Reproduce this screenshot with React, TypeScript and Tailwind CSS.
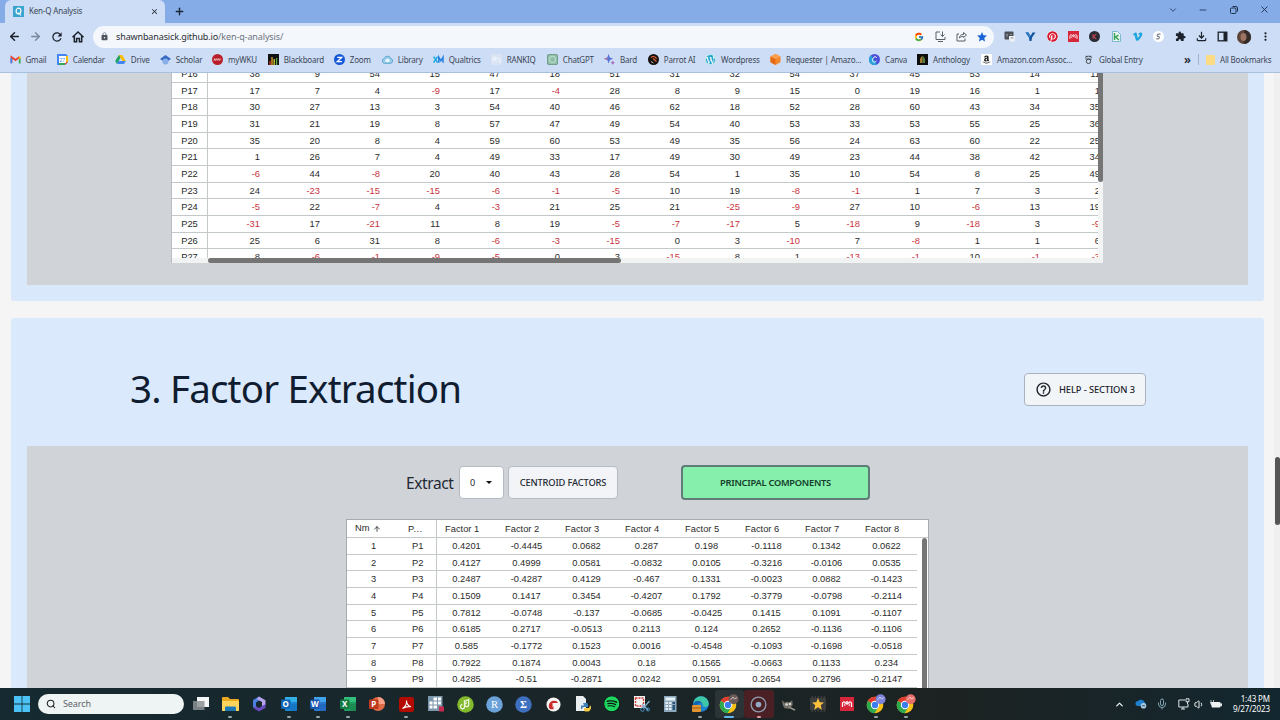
import { ReactNode } from "react";
import { FcGoogle } from "react-icons/fc";
import { FaAmazon, FaPinterest, FaSpotify, FaVimeoV, FaWordpress } from "react-icons/fa";
import {
  MdClose,
  MdExtension,
  MdHelpOutline,
  MdLock,
  MdMoreVert,
  MdOutlineFileDownload,
  MdRefresh,
  MdStar,
} from "react-icons/md";
import { ArrowLeft, ArrowRight, ArrowUp, ChevronDown, ChevronUp, Mic, Minus, Plus, Search, Volume1, X } from "lucide-react";

const correlations: { name: string; values: number[] }[] = [
  { name: "P16", values: [38, 9, 54, 15, 47, 18, 51, 31, 32, 54, 37, 45, 53, 14, 11] },
  { name: "P17", values: [17, 7, 4, -9, 17, -4, 28, 8, 9, 15, 0, 19, 16, 1, 1] },
  { name: "P18", values: [30, 27, 13, 3, 54, 40, 46, 62, 18, 52, 28, 60, 43, 34, 35] },
  { name: "P19", values: [31, 21, 19, 8, 57, 47, 49, 54, 40, 53, 33, 53, 55, 25, 36] },
  { name: "P20", values: [35, 20, 8, 4, 59, 60, 53, 49, 35, 56, 24, 63, 60, 22, 25] },
  { name: "P21", values: [1, 26, 7, 4, 49, 33, 17, 49, 30, 49, 23, 44, 38, 42, 34] },
  { name: "P22", values: [-6, 44, -8, 20, 40, 43, 28, 54, 1, 35, 10, 54, 8, 25, 49] },
  { name: "P23", values: [24, -23, -15, -15, -6, -1, -5, 10, 19, -8, -1, 1, 7, 3, 2] },
  { name: "P24", values: [-5, 22, -7, 4, -3, 21, 25, 21, -25, -9, 27, 10, -6, 13, 19] },
  { name: "P25", values: [-31, 17, -21, 11, 8, 19, -5, -7, -17, 5, -18, 9, -18, 3, -9] },
  { name: "P26", values: [25, 6, 31, 8, -6, -3, -15, 0, 3, -10, 7, -8, 1, 1, 6] },
  { name: "P27", values: [8, -6, -1, -9, -5, 0, 3, -15, 8, 1, -13, -1, 10, -1, -3] },
];

const loadings: number[][] = [
  [0.4201, -0.4445, 0.0682, 0.287, 0.198, -0.1118, 0.1342, 0.0622],
  [0.4127, 0.4999, 0.0581, -0.0832, 0.0105, -0.3216, -0.0106, 0.0535],
  [0.2487, -0.4287, 0.4129, -0.467, 0.1331, -0.0023, 0.0882, -0.1423],
  [0.1509, 0.1417, 0.3454, -0.4207, 0.1792, -0.3779, -0.0798, -0.2114],
  [0.7812, -0.0748, -0.137, -0.0685, -0.0425, 0.1415, 0.1091, -0.1107],
  [0.6185, 0.2717, -0.0513, 0.2113, 0.124, 0.2652, -0.1136, -0.1106],
  [0.585, -0.1772, 0.1523, 0.0016, -0.4548, -0.1093, -0.1698, -0.0518],
  [0.7922, 0.1874, 0.0043, 0.18, 0.1565, -0.0663, 0.1133, 0.234],
  [0.4285, -0.51, -0.2871, 0.0242, 0.0591, 0.2654, 0.2796, -0.2147],
];

const Chrome = ({ badge }: { badge?: string }) => (
  <svg viewBox="0 0 20 20" className="size-[20px]">
    <circle cx="9" cy="11" r="8.3" fill="#fbc116" />
    <path d="M9 11 1.8 6.9A8.3 8.3 0 0 1 16.2 6.9H9z" fill="#e33b2e" />
    <path d="M1.8 6.9A8.3 8.3 0 0 0 8.6 19.3L12.5 13 9 11z" fill="#2da94f" />
    <circle cx="9" cy="11" r="4.2" fill="#fff" />
    <circle cx="9" cy="11" r="3.2" fill="#3b7ded" />
    {badge && <circle cx="14.6" cy="5.2" r="5" fill={badge} />}
    {badge && <path d="M11.5 6 14 3l1.5 2L18 3.5" stroke="#fff" strokeOpacity=".6" fill="none" />}
  </svg>
);

const Mendeley = () => (
  <svg viewBox="0 0 14 14" className="size-full">
    <rect width="14" height="14" fill="#d7263a" />
    <path d="M2.5 10V6.2a1.4 1.4 0 0 1 2.3-1L7 7.2l2.2-2a1.4 1.4 0 0 1 2.3 1V10" stroke="#fff" strokeWidth="1.2" fill="none" />
    <circle cx="7" cy="5" r="1" fill="#fff" />
    <path d="M4.8 6.5v2.5M9.2 6.5v2.5" stroke="#fff" strokeWidth=".9" />
  </svg>
);

const bookmarks: { label: string; width: string; icon: ReactNode }[] = [
  {
    label: "Gmail",
    width: "w-[47.3px]",
    icon: (
      <svg viewBox="0 0 11 11">
        <path d="M1.5 9V3l4 3 4-3" stroke="#e94235" strokeWidth="1.8" fill="none" />
        <path d="M1.3 9.5V4" stroke="#4285f4" strokeWidth="1.7" />
        <path d="M9.7 9.5V4" stroke="#34a853" strokeWidth="1.7" />
        <path d="M9.7 5V2.5" stroke="#fbbc04" strokeWidth="1.7" />
      </svg>
    ),
  },
  {
    label: "Calendar",
    width: "w-[58px]",
    icon: (
      <svg viewBox="0 0 11 11">
        <path d="M0 0h9l2 2v6L8 11H0z" fill="#4285f4" />
        <path d="M9 2h2v6H9z" fill="#fbbc04" />
        <path d="M2 9h6v2H2z" fill="#34a853" />
        <path d="M8 11V8h3z" fill="#ea4335" />
        <path d="M2 2h7v7H2z" fill="#fff" />
        <text x="2.6" y="7.6" fontSize="5" fill="#4285f4" fontFamily="Liberation Sans, sans-serif">27</text>
      </svg>
    ),
  },
  {
    label: "Drive",
    width: "w-[45px]",
    icon: (
      <svg viewBox="0 0 11 11">
        <path d="M3.8 1h3.4L3.6 7.2 1.9 10 .2 7z" fill="#1fa463" />
        <path d="M3.8 1h3.4l3.6 6H7.4z" fill="#fbbc04" />
        <path d="M3.6 7h7.2L9 10H1.9z" fill="#4285f4" />
      </svg>
    ),
  },
  {
    label: "Scholar",
    width: "w-[52.3px]",
    icon: (
      <svg viewBox="0 0 11 11">
        <path d="M5.5 1 11 5 5.5 8.5 0 5z" fill="#356ac3" />
        <circle cx="5.5" cy="7.5" r="3" fill="#88afea" />
      </svg>
    ),
  },
  {
    label: "myWKU",
    width: "w-[55.7px]",
    icon: (
      <svg viewBox="0 0 11 11">
        <circle cx="5.5" cy="5.5" r="5.5" fill="#b81f2b" />
        <path d="M2 6.8 2.7 4.6l1 1.8 1-1.8 1 1.8 1-1.8 1 1.8.9-1.8" stroke="#f3c7ca" strokeWidth=".9" fill="none" />
      </svg>
    ),
  },
  {
    label: "Blackboard",
    width: "w-[66px]",
    icon: (
      <svg viewBox="0 0 11 11">
        <rect width="11" height="11" fill="#111" />
        <path d="M2 11V7" stroke="#d3362e" strokeWidth="1.3" />
        <path d="M4 11V3" stroke="#f0a92b" strokeWidth="1.3" />
        <path d="M6.2 11V5" stroke="#d9cf34" strokeWidth="1.3" />
        <path d="M8.6 11V4" stroke="#58a845" strokeWidth="1.3" />
      </svg>
    ),
  },
  {
    label: "Zoom",
    width: "w-[48px]",
    icon: (
      <svg viewBox="0 0 11 11">
        <circle cx="5.5" cy="5.5" r="5.5" fill="#1458d6" />
        <path d="M3.2 3.4h4.4L3.4 7.6h4.5" stroke="#fff" strokeWidth="1.4" fill="none" />
      </svg>
    ),
  },
  {
    label: "Library",
    width: "w-[51px]",
    icon: (
      <svg viewBox="0 0 11 11">
        <path d="M2.5 9.3a2.4 2.4 0 0 1-.4-4.7 3.6 3.6 0 0 1 6.8 0 2.4 2.4 0 0 1-.4 4.7z" fill="#9ccde9" stroke="#5aa6d0" />
        <path d="M3.6 8V6.2a2 2 0 0 1 3.8 0V8z" fill="#ecf6fb" />
      </svg>
    ),
  },
  {
    label: "Qualtrics",
    width: "w-[58px]",
    icon: (
      <svg viewBox="0 0 11 11">
        <path d="m.6 2.6 4 6M4.6 2.6l-4 6" stroke="#17a9e0" strokeWidth="1.5" />
        <path d="M5.8 8.8V3.2l2.1 3.6L10 3.2v5.6" stroke="#2280e0" strokeWidth="1.5" fill="none" />
      </svg>
    ),
  },
  {
    label: "RANKIQ",
    width: "w-[56px]",
    icon: (
      <svg viewBox="0 0 11 11">
        <rect width="11" height="11" fill="#d9e3f3" />
        <path d="M2 8V3h2.4v2.5H2M5.5 8a2.3 2.3 0 1 1 3 0M8 7l1.5 2" stroke="#f0f5fb" fill="none" />
      </svg>
    ),
  },
  {
    label: "ChatGPT",
    width: "w-[57.3px]",
    icon: (
      <svg viewBox="0 0 11 11">
        <rect x=".4" y=".4" width="10.2" height="10.2" rx="1.6" fill="#8fbfa9" stroke="#5f8c78" strokeWidth=".8" />
        <circle cx="5.5" cy="5.5" r="3.2" fill="none" stroke="#c4e2d3" />
      </svg>
    ),
  },
  {
    label: "Bard",
    width: "w-[43.7px]",
    icon: (
      <svg viewBox="0 0 11 11">
        <path d="M4.6 0 5.9 3.5 9.2 4.8 5.9 6.1 4.6 9.6 3.3 6.1 0 4.8 3.3 3.5z" fill="#5576d5" />
        <path d="m0 4.8 3.3-1.3v2.6z" fill="#c469a6" />
        <path d="m8.8 6.4.7 1.6 1.5.7-1.5.7-.7 1.6-.7-1.6-1.5-.7 1.5-.7z" fill="#a465bb" />
      </svg>
    ),
  },
  {
    label: "Parrot AI",
    width: "w-[57.3px]",
    icon: (
      <svg viewBox="0 0 11 11">
        <circle cx="5.5" cy="5.5" r="5.5" fill="#17120f" />
        <path d="M3 3.5c2-1.8 5-.9 5.5 1.5M5 4.5l3.5 3" stroke="#e8663b" strokeWidth="1.1" fill="none" />
        <path d="M3 7.5 5.5 9" stroke="#ddd" strokeWidth=".8" />
      </svg>
    ),
  },
  { label: "Wordpress", width: "w-[65px]", icon: <FaWordpress className="rounded-full bg-[#eaf6fa] text-[#24a7ca]" /> },
  {
    label: "Requester | Amazo...",
    width: "w-[99px]",
    icon: (
      <svg viewBox="0 0 11 11">
        <path d="m5.5 0 5 2.6v5.6L5.5 11l-5-2.8V2.6z" fill="#f5872a" />
        <path d="M5.5 5v6l-5-2.8V2.6z" fill="#e46a16" />
        <path d="m5.5 0 5 2.6L5.5 5l-5-2.4z" fill="#fba04e" />
      </svg>
    ),
  },
  {
    label: "Canva",
    width: "w-[48px]",
    icon: (
      <svg viewBox="0 0 11 11">
        <circle cx="5.5" cy="5.5" r="5.5" fill="#4a4fdc" />
        <path d="M0 5.5a5.5 5.5 0 0 0 8 4.9L2 1.3A5.5 5.5 0 0 0 0 5.5" fill="#2aa3d8" />
        <path d="M7.6 3.8c-.3-1.6-2.6-1.5-3.6.4-1.1 2-.4 4 1.2 4 1 0 1.9-.6 2.3-1.5" stroke="#fff" strokeWidth=".9" fill="none" />
      </svg>
    ),
  },
  {
    label: "Anthology",
    width: "w-[64px]",
    icon: (
      <svg viewBox="0 0 11 11">
        <rect width="11" height="11" fill="#0d0d0d" />
        <path d="M5.5 1.5 3 4.5V9h2.5z" fill="#a7792e" />
        <path d="M5.5 1.5 8 4.5V9H5.5z" fill="#587a3b" />
      </svg>
    ),
  },
  {
    label: "Amazon.com Assoc...",
    width: "w-[102px]",
    icon: (
      <span className="flex size-full items-center justify-center rounded-[1px] bg-white">
        <FaAmazon className="size-[9px] text-[#1a1a1a]" />
      </span>
    ),
  },
  {
    label: "Global Entry",
    width: "w-[101px]",
    icon: (
      <svg viewBox="0 0 11 11" fill="none" stroke="#43484f">
        <circle cx="5.5" cy="7.3" r="2.2" />
        <path d="M2 3.5c2-1.8 5-1.8 7 0M3 1.8l1 1.6M8 1.8 7 3.4M2.5 5l6 .2" />
      </svg>
    ),
  },
];

const extensions: ReactNode[] = [
  <svg viewBox="0 0 11 11">
    <rect x=".5" y=".5" width="9" height="8" rx="1" fill="#4c5258" />
    <path d="M5 5h6v5l-3 1-3-2z" fill="#eef1f4" />
    <path d="M2 3.5h2M2 5h2M6 3.5h2M6.5 7h3" stroke="#8c939b" />
  </svg>,
  <svg viewBox="0 0 11 11">
    <path d="M.5 1.5h3l2 3.5 2-3.5h3L7 6.5 6.5 10h-2L4 6.5z" fill="#12539d" />
    <path d="M.5 1.5h3l2 3.5-1 2z" fill="#2a7ac6" />
  </svg>,
  <FaPinterest className="rounded-full bg-white text-[#d8142c]" />,
  <Mendeley />,
  <svg viewBox="0 0 11 11">
    <circle cx="5.5" cy="5.5" r="5.5" fill="#2b2d36" />
    <path d="M4 3v5M7.3 3 4.5 5.5 7.3 8" stroke="#b8454d" strokeWidth="1.1" fill="none" />
  </svg>,
  <svg viewBox="0 0 11 11">
    <path d="M1.5.5h5l3 3v7h-8z" fill="#eaf6f2" stroke="#54a6c0" strokeWidth=".7" />
    <path d="M3.5 2v7M7.5 4.2 4.5 6 8 9" stroke="#3aa55b" strokeWidth="1.5" fill="none" />
  </svg>,
  <FaVimeoV className="text-[#1ba6de]" />,
  <svg viewBox="0 0 11 11">
    <circle cx="5.5" cy="5.5" r="5.5" fill="#fff" />
    <path d="M7.6 3.2H5.3c-1.3 0-1.6 2.2 0 2.2s1.2 2.4-.2 2.4H3.3" stroke="#7f858b" strokeWidth="1.2" fill="none" />
  </svg>,
  <MdExtension className="text-[#1c222c]" />,
  <MdOutlineFileDownload className="scale-130 text-[#1c222c]" />,
  <svg viewBox="0 0 11 11">
    <rect x="1.2" y="1.2" width="8.6" height="8.6" fill="none" stroke="#1c222c" strokeWidth="1.3" />
    <path d="M6.5 1h3.5v9H6.5z" fill="#1c222c" />
  </svg>,
];

// square office style icon with a white initial on the left
const Office = ({ letter, dark, mid, light }: { letter: string; dark: string; mid: string; light: string }) => (
  <svg viewBox="0 0 16 16" className="size-[16px]">
    <rect x="4" y="1" width="12" height="14" rx="1" fill={mid} />
    <path d="M4 2a1 1 0 0 1 1-1h10a1 1 0 0 1 1 1v4H4z" fill={light} />
    <path d="M10 8h6v6a1 1 0 0 1-1 1h-5z" fill={dark} fillOpacity=".45" />
    <rect y="3.5" width="9.5" height="9.5" rx="1" fill={dark} />
    <text x="4.75" y="11.2" fontSize="8" fontWeight="700" fill="#fff" textAnchor="middle" fontFamily="Noto Sans, sans-serif">
      {letter}
    </text>
  </svg>
);

const Round = ({ color, children }: { color: string; children: ReactNode }) => (
  <svg viewBox="0 0 16 16" className="size-[17px]">
    <circle cx="8" cy="8" r="7.8" fill={color} />
    {children}
  </svg>
);

const taskbar: { icon: ReactNode; open?: boolean; active?: boolean; recording?: boolean }[] = [
  {
    icon: (
      <svg viewBox="0 0 16 16" className="size-[16px]">
        <rect x="4" y="1" width="12" height="10" fill="#f4f6f7" />
        <rect y="5" width="11.5" height="9" fill="#8b9093" fillOpacity=".85" />
      </svg>
    ),
  },
  {
    open: true,
    icon: (
      <svg viewBox="0 0 17 16" className="h-[16px] w-[17px]">
        <path d="M0 2a1 1 0 0 1 1-1h5l2 2h8a1 1 0 0 1 1 1v10a1 1 0 0 1-1 1H1a1 1 0 0 1-1-1z" fill="#eba921" />
        <path d="M0 5h17v9a1 1 0 0 1-1 1H1a1 1 0 0 1-1-1z" fill="#fbd45c" />
        <path d="M3 15v-3.5a1 1 0 0 1 1-1h9a1 1 0 0 1 1 1V15z" fill="#1d78b8" />
      </svg>
    ),
  },
  {
    icon: (
      <svg viewBox="0 0 16 16" className="size-[16px]">
        <path d="M8 .5 2 4v7l3 2V6.5L10.5 3z" fill="#4b7fdd" />
        <path d="m8 .5 6.5 3.7V9L11 11V6L5.5 3z" fill="#b3a4ec" />
        <path d="M14.5 8v3.8L8 15.5l-6-3.7 3-1.5L8 12z" fill="#6a4bc0" />
      </svg>
    ),
  },
  { open: true, icon: <Office letter="O" dark="#0f66b6" mid="#1a86d3" light="#35b1ea" /> },
  { open: true, icon: <Office letter="W" dark="#1a55b0" mid="#2a78d0" light="#42a5ec" /> },
  { open: true, icon: <Office letter="X" dark="#137a41" mid="#1f9c5f" light="#35bf7c" /> },
  {
    icon: (
      <svg viewBox="0 0 16 16" className="size-[16px]">
        <circle cx="9" cy="8" r="7" fill="#e06a43" />
        <path d="M9 1a7 7 0 0 1 7 7H9z" fill="#f6a188" />
        <rect y="3.5" width="9.5" height="9.5" rx="1" fill="#c03a1f" />
        <text x="4.75" y="11.2" fontSize="8" fontWeight="700" fill="#fff" textAnchor="middle" fontFamily="Noto Sans, sans-serif">P</text>
      </svg>
    ),
  },
  {
    open: true,
    icon: (
      <svg viewBox="0 0 15 15" className="size-[15px]">
        <rect width="15" height="15" rx="2.5" fill="#b30b00" />
        <path d="M3.5 11.5c2.5-1.5 4.3-5 4-8-.2 3 2 6 4.5 6.3-3-.6-6 .2-8.5 1.7" stroke="#fff" strokeWidth="1.1" fill="none" />
      </svg>
    ),
  },
  {
    icon: (
      <svg viewBox="0 0 16 16" className="size-[16px]">
        <rect width="14.5" height="15" fill="#7d97ac" />
        <path d="M1.5 5.5h3v3h-3zm4-4h3.5v3H5.5zm4.5 0h3v3h-3zM5.5 5.5H9v3H5.5zm4.5 0h3v3h-3zM1.5 9.5h3v3h-3zm4 0H9v3H5.5z" fill="#fff" />
        <rect x="11" y="10.5" width="5" height="5" fill="#c92b50" />
      </svg>
    ),
  },
  {
    icon: (
      <Round color="#83b92c">
        <path d="M7 4v5a2 2 0 1 1-2-1M7 5l4-1.5V8a1.8 1.8 0 1 1-1.5-1.5" stroke="#eef7dd" strokeWidth="1.2" fill="none" />
      </Round>
    ),
  },
  {
    icon: (
      <Round color="#6ba2d9">
        <text x="8" y="11.5" fontSize="10" fill="#fff" textAnchor="middle" fontFamily="Liberation Serif, serif">R</text>
      </Round>
    ),
  },
  {
    icon: (
      <Round color="#3f6fbf">
        <text x="8" y="11.7" fontSize="10" fontWeight="700" fill="#fff" textAnchor="middle" fontFamily="Liberation Serif, serif">Σ</text>
      </Round>
    ),
  },
  {
    icon: (
      <svg viewBox="0 0 16 16" className="size-[15px]">
        <circle cx="8" cy="8" r="7.5" fill="#f7f5f4" />
        <path d="M3 10c0-4 2.5-6 6-6 2.5 0 4 1.5 4 4H8v5c-3 .6-5-.6-5-3" fill="#c92b2b" />
        <path d="M7 6.5h6v2H9.5L7 11z" fill="#f7f5f4" />
      </svg>
    ),
  },
  {
    icon: (
      <svg viewBox="0 0 16 16" className="size-[16px]">
        <path d="M1 0h7l3 3v12H1z" fill="#e9eef0" />
        <path d="M8 7h4a2 2 0 0 1 1 2v2H9a2 2 0 0 0-2 2H6V9.5h3z" fill="#4082b7" />
        <path d="M15 9.5a2 2 0 0 1 .6 3.5c-.5 2-1.5 2.6-3.6 2.6s-3-.6-3-1.6V12h5z" fill="#f2c744" />
      </svg>
    ),
  },
  { icon: <FaSpotify className="size-[15.5px] rounded-full bg-[#0b1a12] text-[#1ed760]" /> },
  {
    icon: (
      <svg viewBox="0 0 17 16" className="h-[16px] w-[17px]">
        <rect x="1" width="11" height="12" fill="#f5f5f5" />
        <rect x="2.5" y="2" width="8" height="8" fill="none" stroke="#cc3a36" strokeWidth="1.3" strokeDasharray="2 1" />
        <path d="m16.5 5-6 7M9 8l6 6" stroke="#7fb0cf" strokeWidth="1.3" />
        <circle cx="9.5" cy="13.5" r="1.8" fill="none" stroke="#4d94c4" />
        <circle cx="15" cy="13.5" r="1.5" fill="none" stroke="#4d94c4" />
      </svg>
    ),
  },
  {
    icon: (
      <svg viewBox="0 0 13 16" className="h-[16px] w-[13px]">
        <rect width="12.5" height="16" fill="#8ba8bd" />
        <rect x="1.5" y="1.5" width="9.5" height="3" fill="#e6f1f5" />
        <path d="M1.5 6H4v2H1.5zm3.5 0h2.5v2H5zM1.5 9H4v2H1.5zM5 9h2.5v2H5zm-3.5 3H4v2H1.5zM5 12h2.5v2H5z" fill="#e7eef3" />
        <path d="M8.5 6H11v2H8.5zm0 3H11v5H8.5z" fill="#2b5379" />
      </svg>
    ),
  },
  {
    open: true,
    icon: (
      <svg viewBox="0 0 17 17" className="size-[17px]">
        <circle cx="9" cy="8" r="7.8" fill="#1a81d3" />
        <path d="M1.2 8A7.8 7.8 0 0 1 16.8 8c0 3-4.5 4-6 2 .5-2-1-4-4-4-2.5 0-4.5 1-5.6 2" fill="#3ec6a6" />
        <path d="M1.2 8c1.5-4 7-4 8.5-1-3.5-.5-6 2-5 6z" fill="#1463b1" />
        <rect y="9" width="9" height="7" rx="1" fill="#e29632" />
        <path d="M0 12h9" stroke="#9b5b16" />
      </svg>
    ),
  },
  { active: true, icon: <Chrome badge="#6b5a55" /> },
  {
    recording: true,
    icon: (
      <svg viewBox="0 0 18 18" className="size-[17px]">
        <circle cx="9" cy="9" r="7.8" fill="none" stroke="#8f9db0" strokeWidth="1.4" />
        <circle cx="9" cy="9" r="3" fill="#93aac4" />
      </svg>
    ),
  },
  {
    icon: (
      <svg viewBox="0 0 16 16" className="size-[15px]">
        <path d="M1 3.5 4 6l2-1 3 .5 3-2 .5 5L9 12.5l-5-.5-2-3z" fill="#77736a" />
        <circle cx="6" cy="8" r="1.4" fill="#ddd" />
        <circle cx="9.5" cy="7.5" r="1.3" fill="#ddd" />
        <path d="m9 11 6 3" stroke="#a8a093" strokeWidth="1.5" />
      </svg>
    ),
  },
  {
    icon: (
      <svg viewBox="0 0 16 16" className="size-[16px]">
        <rect width="16" height="16" fill="#3c3e3d" />
        <path d="M0 1h16M0 15h16" stroke="#15191a" strokeWidth="1.5" strokeDasharray="1.5 1.5" />
        <path d="m8 2 1.7 4.2 4.3.3-3.3 2.8 1.1 4.4L8 11.3l-3.8 2.4 1.1-4.4L2 6.5l4.3-.3z" fill="#fbc13c" />
      </svg>
    ),
  },
  {
    icon: (
      <span className="size-[14px]">
        <Mendeley />
      </span>
    ),
  },
  { open: true, icon: <Chrome badge="#7c83d8" /> },
  { open: true, icon: <Chrome badge="#e8706b" /> },
];

const Browser = () => (
  <div className="flex h-[73px] shrink-0 flex-col border-b border-[#a9bfe0] bg-[#cdddf5] text-[#3b4757]">
    <div className="flex h-[23px] bg-[#85ace7]">
      <div className="ml-[5px] flex w-[160px] items-center rounded-t-[6px] bg-[#cdddf5] pb-px pl-2 pr-[6px]">
        <svg viewBox="0 0 11 11" className="size-[11px]">
          <rect width="11" height="11" fill="#3ba5cf" />
          <ellipse cx="5.5" cy="5" rx="2.4" ry="2.8" fill="none" stroke="#fff" strokeWidth="1.2" />
          <path d="m5.5 6.5 2.5 3" stroke="#fff" strokeWidth="1.1" />
        </svg>
        <span className="ml-[5px] flex-1 text-[8px] tracking-[-0.18px]">Ken-Q Analysis</span>
        <MdClose className="size-[9px] text-[#202734]" />
      </div>
      <Plus className="ml-[9px] mt-[6px] size-[11px] text-[#1a2636]" strokeWidth={3} />
      <div className="ml-auto mr-[10px] flex items-center gap-[20.5px] pb-[4px] text-[#1f3353]">
        <ChevronDown className="size-[10px]" />
        <Minus className="size-[10px]" />
        <svg viewBox="0 0 10 10" className="size-[10px]" fill="none" stroke="currentColor">
          <rect x="1.5" y="3" width="5.5" height="5.5" rx="1" />
          <path d="M3.5 1.5H7A1.5 1.5 0 0 1 8.5 3v3.5" />
        </svg>
        <X className="size-[11px]" />
      </div>
    </div>
    <div className="flex h-[26px] items-center pt-[1px] text-[#1c222c]">
      <ArrowLeft className="ml-[8px] size-[13px]" strokeWidth={2.8} />
      <ArrowRight className="ml-[8px] size-[13px] text-[#78869b]" strokeWidth={2.4} />
      <MdRefresh className="ml-[8px] size-[14px]" />
      <svg viewBox="0 0 14 14" className="ml-[7px] size-[14px]" fill="none" stroke="currentColor" strokeWidth="1.5">
        <path d="M1.5 7.300 7 2l5.500 5.300M3.300 6v5.800h2.300V8.500h2.800v3.300h2.300V6" />
      </svg>
      <div className="ml-[8px] flex h-[22px] w-[901px] items-center rounded-full bg-[#f4f8fd] pl-[7px] pr-[6px]">
        <MdLock className="size-[9px] text-[#4e555e]" />
        <div className="ml-[7px] flex-1 text-[9px] tracking-[-0.12px] text-[#2a2e34]">
          shawnbanasick.github.io<span className="text-[#6d747d]">/ken-q-analysis/</span>
        </div>
        <FcGoogle className="size-[10px]" />
        <svg viewBox="0 0 11 11" className="ml-[11px] size-[11px]" fill="none" stroke="#596069">
          <path d="M5 1H1v7.5h9V6M3 10.5h5M7.5.5v5M5.5 3.5l2 2 2-2" />
        </svg>
        <svg viewBox="0 0 11 11" className="ml-[10px] size-[11px]" fill="none" stroke="#596069">
          <path d="M3 3H1v7h8V7.5M3.5 7c0-2.5 1.5-3.5 4-3.5V1.5L10.5 4 7.5 6.5v-1c-2 0-3 .3-4 1.5" />
        </svg>
        <MdStar className="ml-[9px] size-[12px] text-[#1b63d6]" />
      </div>
      <div className="ml-[10px] flex gap-[10.32px] *:flex *:size-[11px] *:items-center *:justify-center">
        {extensions.map((icon, i) => (
          <span key={i} className="*:size-[11px]">
            {icon}
          </span>
        ))}
      </div>
      <svg viewBox="0 0 14 14" className="ml-[9px] size-[14px]">
        <circle cx="7" cy="7" r="7" fill="#5c4438" />
        <path d="M7 0a7 7 0 0 1 0 14z" fill="#332c2b" />
        <ellipse cx="6.5" cy="7" rx="3" ry="4" fill="#9d7462" />
      </svg>
      <MdMoreVert className="ml-[8px] size-[13px]" />
    </div>
    <div className="flex h-[21px] items-center whitespace-nowrap pl-[9.5px] text-[8px] tracking-[-0.2px]">
      {bookmarks.map((b) => (
        <div key={b.label} className={`flex shrink-0 items-center gap-[5px] ${b.width}`}>
          <span className="flex size-[11px] shrink-0 *:size-[11px]">{b.icon}</span>
          <span>{b.label}</span>
        </div>
      ))}
      <span className="w-[14px] text-[12px] font-semibold leading-none text-[#1c222c]">»</span>
      <div className="mr-[7px] h-[11px] w-px bg-[#9fb2d0]" />
      <div className="mr-[5px] h-[10px] w-[9px] rounded-[1px] bg-[#fbdc84]" />
      <span>All Bookmarks</span>
    </div>
  </div>
);

const CorrelationTable = () => (
  <div className="ml-[144px] flex h-[190px] w-[932px] flex-col border-l border-[#b9bdc2] bg-white">
    <div className="flex h-[185px] overflow-hidden">
      <div className="w-[926px] overflow-hidden">
        <div className="-mt-[7px] w-[936px]">
          {correlations.map((row) => (
            <div key={row.name} className="flex h-[16.67px] border-b border-[#c3c8c9] leading-[17px]">
              <div className="h-full w-[36px] shrink-0 border-r border-[#c3c8c9] text-center">{row.name}</div>
              {row.values.map((value, i) => (
                <div key={i} className={`w-[60px] shrink-0 pr-[8px] text-right ${value < 0 ? "text-[#c8323c]" : ""}`}>
                  {value}
                </div>
              ))}
            </div>
          ))}
        </div>
      </div>
      <div className="w-[5px] bg-[#f3f4f4]">
        <div className="h-[109px] rounded-b-full bg-[#757575]" />
      </div>
    </div>
    <div className="h-[5px] bg-[#f1f2f2] pl-[36px]">
      <div className="h-[5px] w-[413px] rounded-full bg-[#757575]" />
    </div>
  </div>
);

const FactorTable = () => (
  <div className="ml-[319px] flex h-[180px] w-[583px] flex-col border border-[#a6abaf] bg-white">
    <div className="flex h-[18px] shrink-0 border-b border-[#c3c8c9] leading-[19px]">
      <div className="flex w-[53px] items-center gap-[3px] pl-[8px]">
        Nm <ArrowUp className="size-[8px]" strokeWidth={2.5} />
      </div>
      <div className="w-[36.5px] border-r border-[#c3c8c9] pl-[8px] tracking-[0.4px]">P...</div>
      {loadings[0].map((_, i) => (
        <div key={i} className="w-[60px] pl-[8.5px]">
          Factor {i + 1}
        </div>
      ))}
    </div>
    <div className="flex flex-1 overflow-hidden">
      <div className="w-[570px]">
        {loadings.map((row, n) => (
          <div key={n} className="flex h-[16.67px] border-b border-[#c3c8c9] text-center leading-[17px]">
            <div className="w-[53px]">{n + 1}</div>
            <div className="h-full w-[36.5px] border-r border-[#c3c8c9]">P{n + 1}</div>
            {row.map((value, i) => (
              <div key={i} className="w-[60px]">
                {value}
              </div>
            ))}
          </div>
        ))}
      </div>
      <div className="ml-auto mr-px w-[5px] rounded-t-full bg-[#757575]" />
    </div>
  </div>
);

const Page = () => (
  <div className="flex h-[615px] shrink-0 bg-[#f5f5f5]">
    <div className="flex w-[1264px] flex-col gap-[17px] overflow-hidden pl-[11px]">
      <div className="h-[228px] shrink-0 rounded-b-[3px] bg-[#d9e9fb] px-4 pb-4">
        <div className="h-[212px] bg-[#d0d4d8] font-['Liberation_Sans',Arial,sans-serif] text-[9.33px] text-[#2b2b2b]">
          <CorrelationTable />
        </div>
      </div>
      <div className="h-[400px] shrink-0 rounded-t-[3px] bg-[#dae9fc] px-4">
        <div className="flex h-[128px] items-center justify-between pl-[103px] pr-[102px] pt-[15px]">
          <h1 className="-mt-[3px] text-[38.5px] leading-none tracking-[-0.8px] text-[#101c30]">3. Factor Extraction</h1>
          <button className="flex h-[33px] w-[122px] items-center rounded-[4px] border border-[#a9b3bf] bg-[#f2f5f8] pl-[10px] text-[9.3px] font-medium tracking-[-0.1px] text-[#1b222c]">
            <MdHelpOutline className="mr-[7px] size-[17px]" />
            HELP - SECTION 3
          </button>
        </div>
        <div className="h-[273px] bg-[#d0d4d9] pt-[19px]">
          <div className="flex h-[35px] items-center pl-[379px] text-[#1f2933]">
            <span className="w-[53px] pt-[2px] text-[15.5px] tracking-[-0.4px]">Extract</span>
            <button className="flex h-[33px] w-[45px] items-center rounded-[4px] border border-[#b5bbc2] bg-white pl-[10px] text-[9px]">
              0
              <span className="ml-[11px] border-x-[3px] border-t-[3px] border-x-transparent border-t-[#111]" />
            </button>
            <button className="ml-[4px] h-[33px] w-[110px] rounded-[4px] border border-[#b5bbc2] bg-[#f2f4f7] text-[9.3px] font-medium tracking-[-0.15px]">
              CENTROID FACTORS
            </button>
            <button className="ml-[63px] h-[35px] w-[189px] rounded-[4px] border-2 border-[#607c78] bg-[#87efac] text-[9.3px] font-semibold tracking-[-0.25px] text-[#12402a]">
              PRINCIPAL COMPONENTS
            </button>
          </div>
          <div className="mt-[19px] font-['Liberation_Sans',Arial,sans-serif] text-[9.33px] text-[#2b2b2b]">
            <FactorTable />
          </div>
        </div>
      </div>
    </div>
    <div className="ml-auto w-[6px] bg-[#f0f0f0] pl-[1px] pt-[384px]">
      <div className="h-[68px] rounded-full bg-[#555]" />
    </div>
  </div>
);

const Taskbar = () => (
  <div className="flex h-[32px] shrink-0 items-center bg-linear-to-r from-[#152a31] via-[#1c2222] via-75% to-[#12272f] text-white">
    <svg viewBox="0 0 16 16" className="ml-[14px] size-[16px]">
      <path d="M0 0h7.6v7.6H0zm8.4 0H16v7.6H8.4zM0 8.4h7.6V16H0zm8.4 0H16V16H8.4z" fill="#4cc3f7" />
    </svg>
    <div className="ml-[8px] flex h-[20px] w-[146px] items-center gap-[7px] rounded-full bg-[#eef3f4] pl-[8px] text-[9px] tracking-[-0.1px] text-[#5d6468]">
      <Search className="size-[10px] text-[#222]" strokeWidth={2.5} />
      Search
    </div>
    <div className="ml-[2px] flex">
      {taskbar.map((app, i) => (
        <div
          key={i}
          className={`relative flex h-[28px] w-[29.38px] items-center justify-center ${
            app.active ? "rounded-[3px] bg-[#2b3336]" : app.recording ? "rounded-[3px] bg-[#4a2024]" : ""
          }`}
        >
          {app.icon}
          {app.open && <span className="absolute bottom-0 h-[2px] w-[4px] rounded-full bg-[#9aa5aa]" />}
          {app.active && <span className="absolute bottom-0 h-[2px] w-[10px] rounded-full bg-[#62b8e8]" />}
          {app.recording && <span className="absolute bottom-0 h-[2px] w-[4px] rounded-full bg-[#e39a9a]" />}
        </div>
      ))}
    </div>
    <div className="ml-auto mr-[10px] flex items-center">
      <ChevronUp className="size-[11px]" strokeWidth={2.5} />
      <svg viewBox="0 0 12 10" className="ml-[10px] h-[10px] w-[12px]">
        <path d="M3 7a2.5 2.5 0 0 1 0-5 4 4 0 0 1 6.5 1A2.3 2.3 0 0 1 9 7z" fill="#2180cd" />
        <circle cx="8.5" cy="6.7" r="2.8" fill="#a8cbe0" />
        <path d="M7 6.7h3" stroke="#28536d" />
      </svg>
      <Mic className="ml-[9px] size-[12px] text-[#7fa3b2]" />
      <svg viewBox="0 0 12 12" className="ml-[10px] size-[12px]" fill="none" stroke="#dfe5e7">
        <path d="M7 2H.8v7H10V6M3 11h4M5 9v2M8 .8h3v3H8zM9.5 4v2" />
      </svg>
      <Volume1 className="ml-[4px] size-[11px]" />
      <svg viewBox="0 0 12 10" className="ml-[5px] h-[10px] w-[12px]">
        <rect x="1.5" y="3" width="9" height="5.5" rx="1" fill="#eef2f3" />
        <path d="M10.5 4.8H12v2h-1.5zM1 1v3M3.5 1v3M.5 3.5h3.5L3 6H1.5z" fill="#eef2f3" stroke="#eef2f3" strokeWidth=".7" />
      </svg>
      <div className="ml-[8px] w-[40px] whitespace-nowrap text-right text-[8px] leading-[10.5px] tracking-[-0.1px]">
        <div>1:43 PM</div>
        <div>9/27/2023</div>
      </div>
    </div>
  </div>
);

export default function App() {
  return (
    <div className="flex h-[720px] w-[1280px] flex-col overflow-hidden font-['Noto_Sans','Segoe_UI',sans-serif]">
      <Browser />
      <Page />
      <Taskbar />
    </div>
  );
}
